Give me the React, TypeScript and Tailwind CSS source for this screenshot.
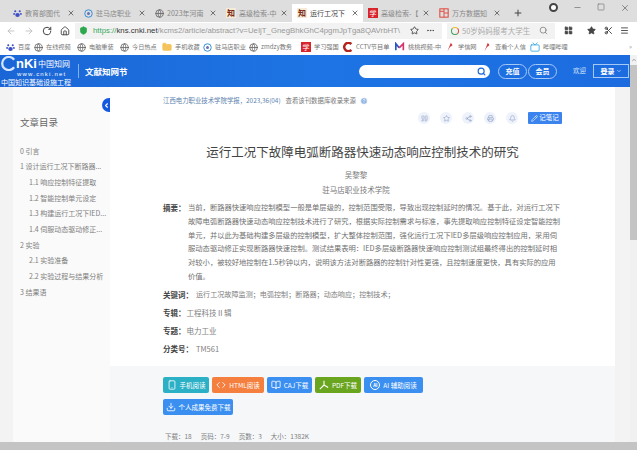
import { ArrowLeft, ArrowRight, RotateCw, Home, ShieldCheck, Star, MoreHorizontal, Search, LayoutGrid, X, Plus, Menu, Minus, Square, Globe, Folder, Quote, Share2, Printer, Bell, Pencil, Smartphone, Code, BookOpen, Download, HelpCircle, ChevronDown, ChevronLeft, ChevronUp, Tv, Scissors } from "lucide-react";

const cjk = "font-['Noto_Sans_CJK_SC','Noto_Sans',sans-serif]";

const tabs = [
  { title: "教育部图代", icon: "paw" },
  { title: "驻马店职业", icon: "ring" },
  { title: "2023年河南", icon: "globe" },
  { title: "高级检索-中", icon: "cnki" },
  { title: "运行工况下", icon: "cnki", active: true },
  { title: "高级检索-【", icon: "red" },
  { title: "万方数据知", icon: "wf" },
];

const bookmarks = [
  { label: "百度", icon: "paw", w: "w-[28px]" },
  { label: "在线视频", icon: "globe", w: "w-[43px]" },
  { label: "电脑重装", icon: "globe", w: "w-[43px]" },
  { label: "今日热点", icon: "globe", w: "w-[42px]" },
  { label: "手机收藏", icon: "folder", w: "w-[41px]" },
  { label: "驻马店职业", icon: "ring", w: "w-[46px]" },
  { label: "zmdzy教务", icon: "globe", w: "w-[52px]" },
  { label: "学习强国", icon: "red", w: "w-[42px]" },
  { label: "CCTV节目单", icon: "cctv", w: "w-[52px]" },
  { label: "桃桃视频-中", icon: "m", w: "w-[50px]" },
  { label: "学信网", icon: "flag", w: "w-[37px]" },
  { label: "查看个人信", icon: "flag", w: "w-[48px]" },
  { label: "哔哩哔哩", icon: "tv", w: "w-[44px]" },
];

const toc = [
  { t: "0 引言" },
  { t: "1 设计运行工况下断路器..." },
  { t: "1.1 响应控制特征提取", sub: true },
  { t: "1.2 智能控制单元设定", sub: true },
  { t: "1.3 构建运行工况下IED...", sub: true },
  { t: "1.4 伺服动态驱动修正...", sub: true },
  { t: "2 实验" },
  { t: "2.1 实验准备", sub: true },
  { t: "2.2 实验过程与结果分析", sub: true },
  { t: "3 结果语" },
];

const abstractLines = [
  "当前，断路器快速响应控制模型一般是单层级的，控制范围受限，导致出现控制延时的情况。基于此，对运行工况下",
  "故障电弧断路器快速动态响应控制技术进行了研究，根据实际控制需求与标准，事先提取响应控制特征设定智能控制",
  "单元，并以此为基础构建多层级的控制模型，扩大整体控制范围，强化运行工况下IED多层级响应控制应用，采用伺",
  "服动态驱动修正实现断路器快速控制。测试结果表明：IED多层级断路器快速响应控制测试组最终得出的控制延时相",
  "对较小，被较好地控制在1.5秒钟以内，说明该方法对断路器的控制针对性更强，且控制速度更快，具有实际的应用",
  "价值。",
];

function SiteIcon({ kind }: { kind: string }) {
  if (kind === "paw")
    return (
      <svg viewBox="0 0 12 12" className="size-[9px] shrink-0">
        <circle cx="3" cy="3" r="1.4" fill="#3d4fc4" />
        <circle cx="9" cy="3" r="1.4" fill="#3d4fc4" />
        <circle cx="1.5" cy="6.5" r="1.3" fill="#3d4fc4" />
        <circle cx="10.5" cy="6.5" r="1.3" fill="#3d4fc4" />
        <ellipse cx="6" cy="8" rx="3" ry="2.8" fill="#3d4fc4" />
      </svg>
    );
  if (kind === "ring")
    return (
      <svg viewBox="0 0 12 12" className="size-[9px] shrink-0">
        <circle cx="6" cy="6" r="5" fill="none" stroke="#2f8fd8" strokeWidth="1.3" />
        <circle cx="6" cy="6" r="2" fill="#6b6fb8" />
      </svg>
    );
  if (kind === "globe") return <Globe className="size-[9px] shrink-0 text-[#666]" strokeWidth={2.2} />;
  if (kind === "folder") return <Folder className="size-[10px] shrink-0 fill-[#f4c35a] text-[#f4c35a]" />;
  if (kind === "cnki")
    return (
      <span className="flex size-[10px] shrink-0 items-center justify-center bg-[#f6ead8] text-[8px] leading-none font-bold text-[#7a2a12]">
        知
      </span>
    );
  if (kind === "red")
    return (
      <span className="flex size-[10px] shrink-0 items-center justify-center bg-[#d8232a] text-[7px] leading-none text-white">
        学
      </span>
    );
  if (kind === "wf")
    return (
      <svg viewBox="0 0 12 12" className="size-[10px] shrink-0">
        <rect x="1" y="1" width="10" height="10" fill="none" stroke="#e0453a" strokeWidth="1.2" />
        <path d="M6 1v10M6 6h5M1 4h5" stroke="#e0453a" strokeWidth="1.1" />
      </svg>
    );
  if (kind === "cctv")
    return (
      <svg viewBox="0 0 12 12" className="size-[10px] shrink-0">
        <path d="M10 2.5A5 5 0 1 0 10 9.5" fill="none" stroke="#b3261e" strokeWidth="3" />
      </svg>
    );
  if (kind === "m")
    return (
      <svg viewBox="0 0 12 12" className="size-[10px] shrink-0">
        <path d="M1 10V2l4 5" fill="none" stroke="#2a57c8" strokeWidth="2" />
        <path d="M5 7l5-5v8" fill="none" stroke="#d6336c" strokeWidth="2" />
      </svg>
    );
  if (kind === "flag")
    return (
      <svg viewBox="0 0 12 12" className="size-[10px] shrink-0">
        <path d="M3 11 7 1l2 3-3 2z" fill="#d8333a" />
      </svg>
    );
  if (kind === "tv") return <Tv className="size-[10px] shrink-0 text-[#2ea6dc]" strokeWidth={2} />;
  return null;
}

function Tab({ title, icon, active }: { title: string; icon: string; active?: boolean }) {
  return (
    <div className={`flex h-[18px] w-[71px] shrink-0 items-center gap-[3px] pl-[5px] pr-[4px] ${active ? "bg-white" : ""}`}>
      <SiteIcon kind={icon} />
      <span className={`flex-1 text-[7px] leading-none whitespace-nowrap ${active ? "text-[#444]" : "text-[#888]"}`}>{title}</span>
      <X className="size-[8px] shrink-0 text-[#555]" strokeWidth={2.4} />
    </div>
  );
}

function ToolBtn({ icon, label, bg, w }: { icon: React.ReactNode; label: string; bg: string; w: string }) {
  return (
    <div className={`flex h-[16px] items-center justify-center gap-[3px] rounded-[2px] text-[6.5px] leading-none text-white ${bg} ${w}`}>
      {icon}
      <span className="whitespace-nowrap">{label}</span>
    </div>
  );
}

function RoundIcon({ children }: { children: React.ReactNode }) {
  return <div className="flex size-[12px] items-center justify-center rounded-full bg-[#eef2fb] text-[#8f9fc4]">{children}</div>;
}

function Meta({ label, value, gap, size = "text-[7.5px]" }: { label: string; value: string; gap: string; size?: string }) {
  return (
    <div className={`flex h-[18px] items-center pl-[13px] leading-none ${gap}`}>
      <span className="text-[7.5px] font-bold text-[#444]">{label}</span>
      <span className={`text-[#808080] ${size}`}>{value}</span>
    </div>
  );
}

export default function App() {
  return (
    <div className={`flex h-[450px] w-[637px] flex-col overflow-hidden bg-white ${cjk}`}>
      {/* tab strip */}
      <div className="flex h-[22px] shrink-0 items-end bg-[#dedede] pl-[8px]">
        {tabs.map((t) => (
          <Tab key={t.title} title={t.title} icon={t.icon} active={t.active} />
        ))}
        <div className="flex h-[18px] w-[26px] items-center justify-center">
          <Plus className="size-[10px] text-[#444]" strokeWidth={2.4} />
        </div>
        <div className="ml-auto flex h-[22px] items-start gap-[15px] pt-[3px] pr-[7px] text-[#777]">
          <span className="size-[9px] rounded-full border-[2.5px] border-[#444] bg-white" />
          <Minus className="size-[9px]" />
          <Square className="size-[8px]" />
          <X className="size-[10px]" />
        </div>
      </div>

      {/* address bar */}
      <div className="flex h-[17px] shrink-0 items-center bg-white pl-[6px]">
        <div className="flex w-[69px] items-center gap-[8px]">
          <ArrowLeft className="size-[10px] text-[#bbb]" />
          <ArrowRight className="size-[10px] text-[#bbb]" />
          <RotateCw className="size-[10px] text-[#444]" strokeWidth={2.4} />
          <Home className="size-[10px] text-[#444]" strokeWidth={2.2} />
        </div>
        <div className="flex h-[16px] w-[367px] items-center overflow-hidden bg-[#f2f2f2] pl-[4px] pr-[3px] font-['Liberation_Sans',sans-serif] text-[7.8px]">
          <ShieldCheck className="mr-[5px] size-[9px] shrink-0 fill-[#2ea84f] text-[#2ea84f]" />
          <span className="min-w-0 flex-1 whitespace-nowrap">
            <span className="text-[#37a85a]">https://</span>
            <span className="text-[#333]">kns.cnki.net</span>
            <span className="text-[#999]">/kcms2/article/abstract?v=UeIjT_GnegBhkGhC4pgmJpTga8QAVrbHT\</span>
          </span>
          <Star className="mx-[7px] size-[9px] shrink-0 text-[#444]" strokeWidth={2.4} />
          <MoreHorizontal className="mr-[4px] size-[9px] shrink-0 text-[#444]" />
        </div>
        <div className="ml-[5px] flex h-[16px] w-[108px] items-center bg-[#f2f2f2] pl-[4px] pr-[7px] text-[7.5px] text-[#aaa]">
          <span className="mr-[3px] size-[8px] rounded-full border-[1.5px] border-t-[#f1b92f] border-r-[#e0453a] border-b-[#3ca65a] border-l-[#3ca65a]" />
          <span className="flex-1 whitespace-nowrap">50岁妈妈报考大学生</span>
          <Search className="size-[9px] text-[#777]" />
        </div>
        <div className="ml-[9px] flex items-center text-[#444]">
          <LayoutGrid className="size-[9px] fill-[#444]" />
          <Star className="ml-[14px] size-[9px] fill-[#444]" />
          <Scissors className="ml-[8px] size-[9px]" strokeWidth={2.6} />
          <Menu className="ml-[7px] size-[9px]" strokeWidth={2.4} />
        </div>
      </div>

      {/* bookmarks */}
      <div className="flex h-[16px] shrink-0 items-center bg-white pl-[6px] text-[6.2px] leading-none text-[#777]">
        {bookmarks.map((b) => (
          <div key={b.label} className={`flex shrink-0 items-center gap-[3px] whitespace-nowrap ${b.w}`}>
            <SiteIcon kind={b.icon} />
            <span>{b.label}</span>
          </div>
        ))}
        <span className="ml-auto pr-[5px] text-[#999]">»</span>
      </div>

      <div className="flex min-h-0 flex-1">
        <div className="flex min-w-0 flex-1 flex-col">
          {/* site header */}
          <div className="flex h-[32px] shrink-0 items-center bg-gradient-to-r from-[#1b66d6] via-[#1e74e4] to-[#1c6ce0]">
            <div className="flex w-[76px] shrink-0 flex-col pl-[1px] text-white">
              <div className="flex h-[14px] items-center">
                <svg viewBox="0 0 16 16" className="size-[15px]">
                  <path d="M14 4A7 7 0 1 0 14 12" fill="none" stroke="#d5e6ff" strokeWidth="2.4" />
                </svg>
                <span className="font-['Liberation_Sans',sans-serif] text-[13px] leading-none font-bold">nKi</span>
                <span className="ml-[1px] text-[8px] leading-none whitespace-nowrap">中国知网</span>
              </div>
              <span className="pl-[16px] font-['Liberation_Sans',sans-serif] text-[6px] leading-[7px] tracking-[1.2px] whitespace-nowrap">www.cnki.net</span>
              <span className="text-[7px] leading-[8px] whitespace-nowrap">中国知识基础设施工程</span>
            </div>
            <div className="ml-[2px] h-[14px] w-px bg-[#7fb0f2]" />
            <span className="ml-[6px] font-['Noto_Sans_CJK_SC',serif] text-[8.5px] font-bold text-white">文献知网节</span>
            <div className="ml-auto flex items-center">
              <div className="flex h-[13px] w-[131px] items-center justify-end rounded-full bg-white pr-[4px]">
                <Search className="size-[9px] text-[#1b66d6]" strokeWidth={3} />
              </div>
              <div className="ml-[8px] flex h-[15px] w-[29px] items-center justify-center rounded-full border border-[#a6c8f5] text-[7px] font-bold text-white">充值</div>
              <div className="ml-[1px] flex h-[15px] w-[29px] items-center justify-center rounded-full border border-[#a6c8f5] text-[7px] font-bold text-white">会员</div>
              <span className="ml-[16px] text-[6.5px] text-[#cfe2fb]">欢迎</span>
              <div className="mr-[1px] ml-[7px] flex h-[14px] w-[36px] items-center justify-center gap-[1px] border border-[#a6c8f5] text-[7px] font-bold text-white">
                登录
                <ChevronDown className="size-[6px]" />
              </div>
            </div>
          </div>

          {/* body */}
          <div className="flex min-h-0 flex-1 bg-[#f3f3f3] pr-[15px] pl-[13px]">
            {/* sidebar */}
            <aside className="relative w-[97px] shrink-0 bg-[#fafafa] pl-[7px]">
              <div className="absolute top-[11px] right-0 h-[14px] w-[8px] overflow-hidden">
                <div className="flex size-[14px] items-center justify-start rounded-full bg-[#1259e0] pl-[1px] text-white">
                  <ChevronLeft className="size-[7px]" strokeWidth={4} />
                </div>
              </div>
              <h2 className="pt-[26px] text-[9.5px] leading-[18px] font-normal text-[#666]">文章目录</h2>
              <ul className="mt-[12px] text-[7px] text-[#808080]">
                {toc.map((i) => (
                  <li key={i.t} className={`flex h-[15.7px] items-center whitespace-nowrap ${i.sub ? "pl-[9px]" : ""}`}>
                    {i.t}
                  </li>
                ))}
              </ul>
            </aside>

            {/* article */}
            <main className="flex min-w-0 flex-1 flex-col bg-white">
              <div className="flex-1 pl-[40px] pr-[53px]">
                <div className="flex h-[20px] items-start pt-[9px] pl-[13px] text-[6.4px] leading-[10px] whitespace-nowrap">
                  <span className="text-[#5b7fae]">江西电力职业技术学院学报，2023,36(04)</span>
                  <span className="ml-[5px] text-[#777]">查看该刊数据库收录来源</span>
                  <HelpCircle className="mt-[1px] ml-[4px] size-[8px] fill-[#8fb4e0] text-white" />
                </div>
                <div className="mt-[4px] flex h-[14px] items-center justify-end gap-[10px]">
                  <RoundIcon><Quote className="size-[7px]" /></RoundIcon>
                  <RoundIcon><Star className="size-[7px]" /></RoundIcon>
                  <RoundIcon><Share2 className="size-[7px]" /></RoundIcon>
                  <RoundIcon><Printer className="size-[7px]" /></RoundIcon>
                  <RoundIcon><Bell className="size-[7px]" /></RoundIcon>
                  <div className="flex h-[12px] w-[34px] items-center justify-center gap-[1px] rounded-[1px] bg-[#3b84ee] text-[6.5px] text-white">
                    <Pencil className="size-[7px]" />
                    记笔记
                  </div>
                </div>
                <h1 className="mt-[17px] pl-[13px] text-center text-[12.5px] leading-[20px] font-normal whitespace-nowrap text-[#444]">
                  运行工况下故障电弧断路器快速动态响应控制技术的研究
                </h1>
                <p className="mt-[6px] text-center text-[7.5px] leading-[14px] text-[#777]">吴黎黎</p>
                <p className="mt-[1px] text-center text-[7.5px] leading-[14px] text-[#777]">驻马店职业技术学院</p>

                <div className="mt-[4px] flex pl-[13px]">
                  <span className="w-[25px] shrink-0 text-[7.5px] leading-[13.8px] font-bold text-[#444]">摘要：</span>
                  <div className="text-[7.3px] leading-[13.8px] whitespace-nowrap text-[#707070]">
                    {abstractLines.map((l) => (
                      <div key={l}>{l}</div>
                    ))}
                  </div>
                </div>
                <div className="mt-[2px]">
                  <Meta label="关键词：" value="运行工况故障监测；电弧控制；断路器；动态响应；控制技术；" gap="gap-[3px]" size="text-[7.1px]" />
                  <Meta label="专辑：" value="工程科技Ⅱ辑" gap="gap-[1px]" />
                  <Meta label="专题：" value="电力工业" gap="gap-[1px]" />
                  <Meta label="分类号：" value="TM561" gap="gap-[3px]" />
                </div>
              </div>

              {/* downloads band */}
              <div className="h-[76px] shrink-0 bg-[#f5f7f9] pt-[11px] pl-[53px]">
                <div className="flex gap-[3px]">
                  <ToolBtn bg="bg-[#2bb0c6]" w="w-[46px]" label="手机阅读" icon={<Smartphone className="size-[10px]" />} />
                  <ToolBtn bg="bg-[#f47f3e]" w="w-[52px]" label="HTML阅读" icon={<Code className="size-[10px]" />} />
                  <ToolBtn bg="bg-[#3b8ff0]" w="w-[45px]" label="CAJ下载" icon={<BookOpen className="size-[10px]" />} />
                  <ToolBtn bg="bg-[#6aa51f]" w="w-[46px]" label="PDF下载" icon={<svg viewBox="0 0 12 12" className="size-[10px]"><path d="M6 1v5M6 6l-5 5M6 6l5 3" fill="none" stroke="currentColor" strokeWidth="1.3" /></svg>} />
                  <ToolBtn bg="bg-[#3b8ff0]" w="w-[59px]" label="AI 辅助阅读" icon={<span className="flex size-[10px] items-center justify-center rounded-full border border-white text-[4.5px] leading-none font-bold">AI</span>} />
                </div>
                <div className="mt-[6px]">
                  <ToolBtn bg="bg-[#3b8ff0]" w="w-[70px]" label="个人成果免费下载" icon={<Download className="size-[10px]" />} />
                </div>
                <div className="mt-[17px] flex gap-[9px] pl-[2px] text-[6.5px] leading-[9px] text-[#808080]">
                  <span>下载：18</span>
                  <span>页码：7-9</span>
                  <span>页数：3</span>
                  <span>大小：1382K</span>
                </div>
              </div>
            </main>
          </div>
        </div>

        {/* vertical scrollbar */}
        <div className="flex w-[7px] shrink-0 flex-col items-center bg-[#f1f1f1]">
          <ChevronUp className="mt-[2px] size-[6px] text-[#888]" strokeWidth={3} />
          <div className="mt-[2px] h-[175px] w-full bg-[#c4c4c4]" />
        </div>
      </div>

      {/* horizontal scrollbar */}
      <div className="h-[8px] shrink-0 bg-[#c4c4c4]" />
    </div>
  );
}
